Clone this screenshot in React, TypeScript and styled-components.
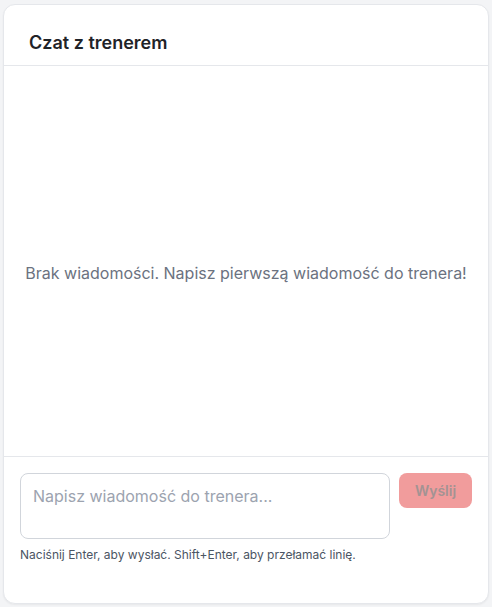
import styled, { createGlobalStyle } from "styled-components";

const GlobalStyle = createGlobalStyle`
  html, body {
    margin: 0;
    padding: 0;
    background: #f3f4f6;
    font-family: Inter, "Noto Sans", sans-serif;
  }
  * {
    box-sizing: border-box;
  }
`;

const Page = styled.div`
  padding: 4px 3px;
  height: 607px;
`;

const Card = styled.div`
  display: flex;
  flex-direction: column;
  height: 600px;
  background: #ffffff;
  border: 1px solid #e5e7eb;
  border-radius: 12px;
  box-shadow: 0 1px 2px rgba(0, 0, 0, 0.05);
  overflow: hidden;
`;

const Header = styled.div`
  padding: 24px 24px 8px 25px;
  border-bottom: 1px solid #e5e7eb;
`;

const Title = styled.h2`
  margin: 0;
  font-size: 18px;
  line-height: 28px;
  font-weight: 600;
  color: #1f2328;
`;

const Messages = styled.div`
  flex: 1;
  display: flex;
  align-items: center;
  justify-content: center;
  padding: 24px 16px 0;
`;

const EmptyText = styled.p`
  margin: 0;
  font-size: 16px;
  color: #6b7280;
`;

const Footer = styled.div`
  border-top: 1px solid #e5e7eb;
  padding: 16px 16px 40px;
`;

const InputRow = styled.div`
  display: flex;
  align-items: flex-start;
  gap: 9px;
`;

const TextArea = styled.textarea`
  flex: 1;
  height: 66px;
  resize: none;
  border: 1px solid #d1d5db;
  border-radius: 8px;
  padding: 10px 12px;
  font-family: Inter, "Noto Sans", sans-serif;
  font-size: 16px;
  line-height: 24px;
  color: #111827;
  outline: none;

  &::placeholder {
    color: #9ca3af;
  }
`;

const SendButton = styled.button`
  width: 73px;
  height: 35px;
  border: none;
  border-radius: 8px;
  background: #f19c9c;
  color: #a39393;
  font-family: Inter, "Noto Sans", sans-serif;
  font-size: 14px;
  font-weight: 600;
  cursor: not-allowed;
`;

const Hint = styled.p`
  margin: 8px 0 0;
  font-size: 12px;
  line-height: 16px;
  color: #4b5563;
`;

export default function App() {
  return (
    <>
      <GlobalStyle />
      <Page>
        <Card>
          <Header>
            <Title>Czat z trenerem</Title>
          </Header>
          <Messages>
            <EmptyText>
              Brak wiadomości. Napisz pierwszą wiadomość do trenera!
            </EmptyText>
          </Messages>
          <Footer>
            <InputRow>
              <TextArea placeholder="Napisz wiadomość do trenera..." />
              <SendButton disabled>Wyślij</SendButton>
            </InputRow>
            <Hint>Naciśnij Enter, aby wysłać. Shift+Enter, aby przełamać linię.</Hint>
          </Footer>
        </Card>
      </Page>
    </>
  );
}
